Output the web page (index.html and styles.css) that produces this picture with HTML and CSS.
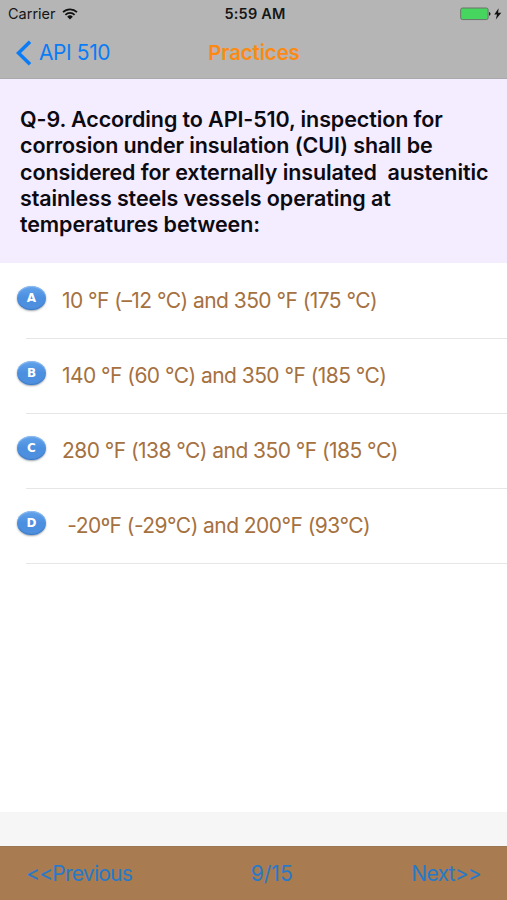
FILE: index.html
```html
<!DOCTYPE html>
<html lang="en">
<head>
  <meta charset="UTF-8">
  <meta name="viewport" content="width=device-width, initial-scale=1.0">
  <title>Practices</title>
  <link rel="stylesheet" href="styles.css">
</head>
<body>
  <header class="top">
    <div class="status">
      <div class="carrier">
        <span>Carrier</span>
        <svg class="wifi" width="16" height="12" viewBox="0 0 16 12">
          <path d="M1 4.2a10 10 0 0 1 14 0M3.4 6.8a6.6 6.6 0 0 1 9.2 0" fill="none" stroke="#111" stroke-width="1.7"/>
          <path d="M5.2 8.7a4 4 0 0 1 5.6 0L8 11.6z" fill="#111"/>
        </svg>
      </div>
      <span class="time">5:59 AM</span>
      <svg class="battery" width="42" height="14" viewBox="0 0 42 14">
        <rect x="0.7" y="1" width="27.4" height="11.6" rx="1.8" fill="#46d65f" stroke="#697269" stroke-width="1"/>
        <path d="M29 5c2 .3 2 3.400 0 3.700z" fill="#222"/>
        <path d="M38.600 1.200L34.300 7.500h2.700L35.800 12.500l5.500-6.700h-3.200z" fill="#111"/>
      </svg>
    </div>
    <nav class="nav">
      <a class="back">
        <svg width="16" height="26" viewBox="0 0 16 26">
          <path d="M14 1.800L2.500 13L14 24.200" fill="none" stroke="#0a7cf5" stroke-width="3.500"/>
        </svg>
        <span>API 510</span>
      </a>
      <h1>Practices</h1>
    </nav>
  </header>

  <main>
    <p class="question">Q-9. According to API-510, inspection for
corrosion under insulation (CUI) shall be
considered for externally insulated  austenitic
stainless steels vessels operating at
temperatures between:</p>

    <ul class="answers">
      <li><span class="badge">A</span><span class="text">10 °F (–12 °C) and 350 °F (175 °C)</span></li>
      <li><span class="badge">B</span><span class="text">140 °F (60 °C) and 350 °F (185 °C)</span></li>
      <li><span class="badge">C</span><span class="text">280 °F (138 °C) and 350 °F (185 °C)</span></li>
      <li><span class="badge">D</span><span class="text"> -20ºF (-29°C) and 200°F (93°C)</span></li>
    </ul>
  </main>

  <div class="strip"></div>
  <footer class="toolbar">
    <a>&lt;&lt;Previous</a>
    <span>9/15</span>
    <a>Next&gt;&gt;</a>
  </footer>
</body>
</html>
```
FILE: styles.css
```css
body {
  margin: 0;
  height: 900px;
  display: flex;
  flex-direction: column;
  font-family: Inter, "Liberation Sans", sans-serif;
  background: #fff;
  overflow: hidden;
}
.top {
  height: 79px;
  background: #b5b5b5;
  border-bottom: 1px solid #aaaaab;
  box-sizing: border-box;
}
.status {
  height: 27px;
  padding: 0 5px 0 8px;
  display: grid;
  grid-template-columns: 1fr auto 1fr;
  align-items: center;
  color: #161616;
}
.carrier {
  display: flex;
  align-items: center;
  gap: 6px;
  font-size: 14.5px;
}
.time {
  font-size: 14.5px;
  font-weight: 600;
  letter-spacing: 0.2px;
}
.battery {
  justify-self: end;
}
.nav {
  height: 51px;
  padding: 0 15px 0 16px;
  display: grid;
  grid-template-columns: 1fr auto 1fr;
  align-items: center;
}
.back {
  display: flex;
  align-items: center;
  gap: 7px;
  color: #0a7cf5;
  font-size: 21px;
  letter-spacing: -0.4px;
}
h1 {
  margin: 0;
  font-size: 20.5px;
  font-weight: 600;
  letter-spacing: -0.15px;
  color: #fb8a13;
}
main {
  flex: 1;
}
.question {
  margin: 0;
  height: 184px;
  padding: 27px 0 0 20px;
  box-sizing: border-box;
  background: #f4edff;
  color: #0c0a10;
  font-size: 21.5px;
  font-weight: 600;
  line-height: 26.3px;
  letter-spacing: -0.11px;
  white-space: pre;
}
.answers {
  list-style: none;
  margin: 0;
  padding: 1px 0 0;
}
.answers li {
  height: 75px;
  padding: 0 0 2px 17px;
  display: flex;
  align-items: center;
  box-sizing: border-box;
  background: linear-gradient(#e6e6e8, #e6e6e8) 26px 100% / 100% 1px no-repeat;
}
.badge {
  width: 29px;
  height: 24px;
  margin: -5px 16px 0 0;
  border-radius: 50%;
  background: linear-gradient(#64a3ea, #4b8fe0 50%, #4f90de);
  box-shadow: 0 1px 2px #55607099, inset 0 1px 1px #8dbdf2, inset 0 -1px 1px #3a78c2;
  color: #fff;
  font: bold 12px/24px "DejaVu Sans", sans-serif;
  text-align: center;
}
.text {
  font-size: 21px;
  letter-spacing: -0.55px;
  color: #a5713f;
  white-space: pre;
}
.strip {
  height: 34px;
  background: #f6f6f6;
}
.toolbar {
  height: 54px;
  padding: 0 26px;
  display: flex;
  justify-content: space-between;
  align-items: center;
  box-sizing: border-box;
  background: #a87b50;
  border-top: 1px solid #9c7754;
  color: #2779cb;
  font-size: 21px;
}
.toolbar a {
  letter-spacing: -0.75px;
}
```
